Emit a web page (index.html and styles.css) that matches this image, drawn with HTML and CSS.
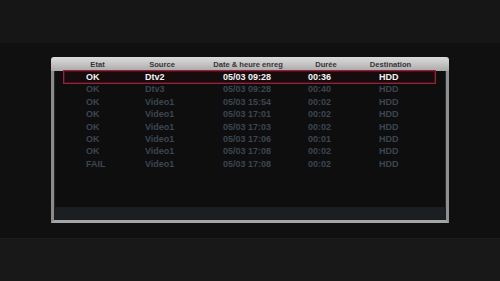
FILE: index.html
```html
<!DOCTYPE html>
<html>
<head>
<meta charset="utf-8">
<link rel="stylesheet" href="styles.css">
</head>
<body>
<div class="screen">
  <div class="topbar"></div>
  <div class="stage">
    <div class="panel">
      <div class="head">
        <span>Etat</span><span>Source</span><span>Date &amp; heure enreg</span><span>Durée</span><span>Destination</span>
      </div>
      <div class="body">
        <div class="rows">
          <div class="row sel"><span>OK</span><span>Dtv2</span><span>05/03 09:28</span><span>00:36</span><span>HDD</span></div>
          <div class="row"><span>OK</span><span>Dtv3</span><span>05/03 09:28</span><span>00:40</span><span>HDD</span></div>
          <div class="row"><span>OK</span><span>Video1</span><span>05/03 15:54</span><span>00:02</span><span>HDD</span></div>
          <div class="row"><span>OK</span><span>Video1</span><span>05/03 17:01</span><span>00:02</span><span>HDD</span></div>
          <div class="row"><span>OK</span><span>Video1</span><span>05/03 17:03</span><span>00:02</span><span>HDD</span></div>
          <div class="row"><span>OK</span><span>Video1</span><span>05/03 17:06</span><span>00:01</span><span>HDD</span></div>
          <div class="row"><span>OK</span><span>Video1</span><span>05/03 17:08</span><span>00:02</span><span>HDD</span></div>
          <div class="row"><span>FAIL</span><span>Video1</span><span>05/03 17:08</span><span>00:02</span><span>HDD</span></div>
        </div>
        <div class="foot"></div>
      </div>
    </div>
  </div>
  <div class="bottombar"></div>
</div>
</body>
</html>
```
FILE: styles.css
```css
html, body {
  margin: 0;
  padding: 0;
  background: #101010;
}
.screen {
  width: 500px;
  height: 281px;
  overflow: hidden;
  font-family: "Liberation Sans", Arial, sans-serif;
  font-weight: bold;
}
.topbar {
  height: 43px;
  background: #161616;
}
.stage {
  height: 195px;
  box-sizing: border-box;
  padding: 14px 0 0 51px;
  background: #101010;
}
.bottombar {
  height: 43px;
  background: #181818;
  border-top: 1px solid #1c1c1c;
  box-sizing: border-box;
}
.panel {
  width: 398px;
}
.head {
  height: 14px;
  box-sizing: border-box;
  padding-left: 19px;
  display: grid;
  grid-template-columns: 55px 74px 98px 58px 71px;
  align-items: center;
  background: linear-gradient(#dcdcdc, #c4c4c4 50%, #a9a9a9);
  border-radius: 3px 3px 0 0;
  font-size: 7.6px;
  color: #353535;
  text-align: center;
  white-space: nowrap;
}
.body {
  border: 3px solid #939695;
  border-top: none;
  border-color: #8a8c8b #8f9190 #a3a6a5 #8a8c8b;
  background: #0e0e0e;
  box-shadow: inset 1px 0 0 #2a2a2a, inset -1px 0 0 #2a2a2a;
}
.rows {
  height: 136px;
}
.row {
  margin: 0 11px 0 10px;
  padding-left: 22px;
  height: 12.4px;
  line-height: 12.4px;
  display: grid;
  grid-template-columns: 59px 78px 85px 71px auto;
  font-size: 9px;
  color: #3a4652;
  white-space: nowrap;
}
.row.sel {
  color: #f2f2f2;
  background: #150c0e;
  box-shadow: 0 0 0 1px #9c1f36, inset 0 0 0 1px #4a0f1a;
}
.foot {
  height: 13px;
  background: #1b1f22;
}
```
